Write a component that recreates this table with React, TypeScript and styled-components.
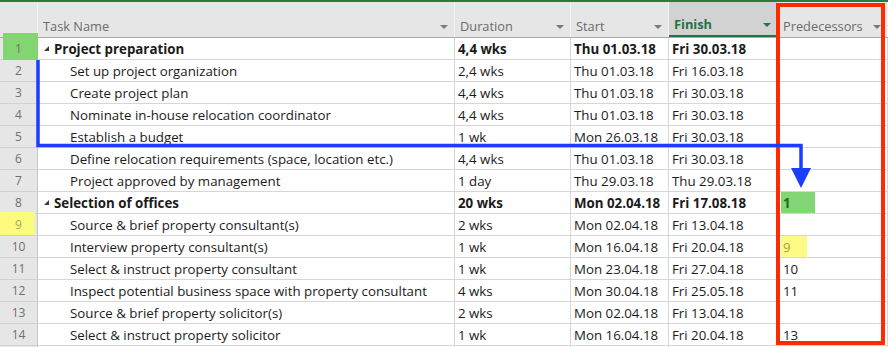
import styled, { createGlobalStyle } from 'styled-components';

const GlobalStyle = createGlobalStyle`
  html, body {
    margin: 0;
    padding: 0;
    background: #ffffff;
  }
  body {
    font-family: 'Open Sans', 'Noto Sans', 'Liberation Sans', sans-serif;
  }
`;

type Task = {
  id: number;
  name: string;
  duration: string;
  start: string;
  finish: string;
  pred?: string;
  summary?: boolean;
};

const TASKS: Task[] = [
  { id: 1, name: 'Project preparation', duration: '4,4 wks', start: 'Thu 01.03.18', finish: 'Fri 30.03.18', summary: true },
  { id: 2, name: 'Set up project organization', duration: '2,4 wks', start: 'Thu 01.03.18', finish: 'Fri 16.03.18' },
  { id: 3, name: 'Create project plan', duration: '4,4 wks', start: 'Thu 01.03.18', finish: 'Fri 30.03.18' },
  { id: 4, name: 'Nominate in-house relocation coordinator', duration: '4,4 wks', start: 'Thu 01.03.18', finish: 'Fri 30.03.18' },
  { id: 5, name: 'Establish a budget', duration: '1 wk', start: 'Mon 26.03.18', finish: 'Fri 30.03.18' },
  { id: 6, name: 'Define relocation requirements (space, location etc.)', duration: '4,4 wks', start: 'Thu 01.03.18', finish: 'Fri 30.03.18' },
  { id: 7, name: 'Project approved by management', duration: '1 day', start: 'Thu 29.03.18', finish: 'Thu 29.03.18' },
  { id: 8, name: 'Selection of offices', duration: '20 wks', start: 'Mon 02.04.18', finish: 'Fri 17.08.18', pred: '1', summary: true },
  { id: 9, name: 'Source & brief property consultant(s)', duration: '2 wks', start: 'Mon 02.04.18', finish: 'Fri 13.04.18' },
  { id: 10, name: 'Interview property consultant(s)', duration: '1 wk', start: 'Mon 16.04.18', finish: 'Fri 20.04.18', pred: '9' },
  { id: 11, name: 'Select & instruct property consultant', duration: '1 wk', start: 'Mon 23.04.18', finish: 'Fri 27.04.18', pred: '10' },
  { id: 12, name: 'Inspect potential business space with property consultant', duration: '4 wks', start: 'Mon 30.04.18', finish: 'Fri 25.05.18', pred: '11' },
  { id: 13, name: 'Source & brief property solicitor(s)', duration: '2 wks', start: 'Mon 02.04.18', finish: 'Fri 13.04.18' },
  { id: 14, name: 'Select & instruct property solicitor', duration: '1 wk', start: 'Mon 16.04.18', finish: 'Fri 20.04.18', pred: '13' },
];

const COLUMNS = '38px 417px 116px 98px 109px 1fr';

type Mark = 'green' | 'yellow' | undefined;

const Sheet = styled.div`
  position: relative;
  width: 888px;
  height: 347px;
  overflow: hidden;
  border-top: 2px solid #2f7a3a;
  box-sizing: border-box;
  font-size: 13.3px;
  color: #1b1b1b;
`;

const HeaderRow = styled.div`
  display: grid;
  grid-template-columns: ${COLUMNS};
  height: 36px;
  background: #e6e6e6;
  border-bottom: 1px solid #a9a9a9;
  box-sizing: border-box;
`;

const HeaderCell = styled.div<{ $active?: boolean }>`
  display: flex;
  align-items: flex-end;
  justify-content: space-between;
  padding: 0 6px 2px 5px;
  border-right: 1px solid #f3f3f3;
  box-sizing: border-box;
  color: ${(p) => (p.$active ? '#217346' : '#6b6b6b')};
  font-weight: ${(p) => (p.$active ? 700 : 400)};
  background: ${(p) => (p.$active ? '#d2d2d2' : 'transparent')};
  border-bottom: ${(p) => (p.$active ? '2px solid #217346' : 'none')};
  font-size: 12.8px;
`;

const DropArrow = styled.span<{ $active?: boolean }>`
  width: 0;
  height: 0;
  margin-bottom: 6px;
  border-left: 4px solid transparent;
  border-right: 4px solid transparent;
  border-top: 4px solid ${(p) => (p.$active ? '#217346' : '#7a7a7a')};
`;

const Row = styled.div`
  display: grid;
  grid-template-columns: ${COLUMNS};
  height: 22px;
`;

const NumCell = styled.div<{ $mark: Mark }>`
  position: relative;
  display: flex;
  align-items: center;
  justify-content: center;
  background: #e6e6e6;
  border-bottom: 1px solid #d2d2d2;
  border-right: 1px solid #c6c6c6;
  box-sizing: border-box;
  color: ${(p) => (p.$mark === 'yellow' ? '#a8a85a' : '#707070')};
  font-size: 12px;

  ${(p) =>
    p.$mark === 'green' &&
    `
    &::before {
      content: '';
      position: absolute;
      left: 3px;
      right: -1px;
      top: -5px;
      bottom: -1px;
      background: #83d572;
    }
  `}
  ${(p) =>
    p.$mark === 'yellow' &&
    `
    &::before {
      content: '';
      position: absolute;
      left: 0;
      right: 2px;
      top: -2px;
      bottom: 0;
      background: #fbfb7e;
    }
  `}
`;

const NumText = styled.span`
  position: relative;
`;

const Cell = styled.div<{ $bold?: boolean }>`
  display: flex;
  align-items: center;
  padding-left: 3px;
  white-space: nowrap;
  overflow: hidden;
  border-bottom: 1px solid #d6d6d6;
  border-right: 1px solid #d6d6d6;
  box-sizing: border-box;
  font-weight: ${(p) => (p.$bold ? 700 : 400)};
`;

const NameCell = styled(Cell)<{ $summary?: boolean }>`
  padding-left: ${(p) => (p.$summary ? '6px' : '32px')};
`;

const Collapse = styled.span`
  width: 0;
  height: 0;
  margin-right: 5px;
  border-left: 5px solid transparent;
  border-bottom: 5px solid #3a3a3a;
`;

const PredCell = styled(Cell)`
  position: relative;
  padding-left: 5px;
`;

const PredTag = styled.span<{ $mark: Mark }>`
  display: flex;
  align-items: center;
  height: 24px;
  margin-left: -2px;
  padding-left: 2px;
  width: ${(p) => (p.$mark === 'green' ? '34px' : '26px')};
  background: ${(p) => (p.$mark === 'green' ? '#82d676' : '#fbfb86')};
  color: ${(p) => (p.$mark === 'green' ? '#1f6b1f' : '#a8a040')};
  box-sizing: border-box;
`;

const RedFrame = styled.div`
  position: absolute;
  left: 776px;
  top: 1px;
  width: 109px;
  height: 342px;
  border: 4px solid #ff2a00;
  box-sizing: border-box;
  pointer-events: none;
`;

const Overlay = styled.svg`
  position: absolute;
  left: 0;
  top: -2px;
  pointer-events: none;
`;

const NUM_MARK: Record<number, Mark> = { 1: 'green', 9: 'yellow' };
const PRED_MARK: Record<number, Mark> = { 8: 'green', 10: 'yellow' };

export default function App() {
  return (
    <>
      <GlobalStyle />
      <Sheet>
        <HeaderRow>
          <HeaderCell />
          <HeaderCell>
            Task Name <DropArrow />
          </HeaderCell>
          <HeaderCell>
            Duration <DropArrow />
          </HeaderCell>
          <HeaderCell>
            Start <DropArrow />
          </HeaderCell>
          <HeaderCell $active>
            Finish <DropArrow $active />
          </HeaderCell>
          <HeaderCell>
            Predecessors <DropArrow />
          </HeaderCell>
        </HeaderRow>
        {TASKS.map((t) => (
          <Row key={t.id}>
            <NumCell $mark={NUM_MARK[t.id]}>
              <NumText>{t.id}</NumText>
            </NumCell>
            <NameCell $bold={t.summary} $summary={t.summary}>
              {t.summary && <Collapse />}
              {t.name}
            </NameCell>
            <Cell $bold={t.summary}>{t.duration}</Cell>
            <Cell $bold={t.summary}>{t.start}</Cell>
            <Cell $bold={t.summary}>{t.finish}</Cell>
            <PredCell $bold={t.summary}>
              {PRED_MARK[t.id] ? <PredTag $mark={PRED_MARK[t.id]}>{t.pred}</PredTag> : t.pred}
            </PredCell>
          </Row>
        ))}
        <Row>
          <NumCell $mark={undefined} />
          <Cell />
          <Cell />
          <Cell />
          <Cell />
          <Cell />
        </Row>
        <RedFrame />
        <Overlay width="888" height="347" viewBox="0 0 888 347">
          <path d="M38 60 V145.5 H801 V171" fill="none" stroke="#1a3dff" strokeWidth="3.5" />
          <polygon points="791,168 811,168 801,188" fill="#1a3dff" />
        </Overlay>
      </Sheet>
    </>
  );
}
